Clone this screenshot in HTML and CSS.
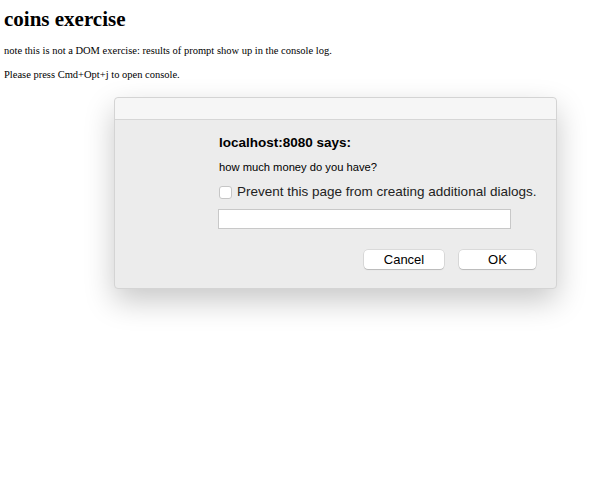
FILE: index.html
```html
<!DOCTYPE html>
<html>
<head>
<meta charset="utf-8">
<link rel="stylesheet" href="styles.css">
</head>
<body>
<div class="page">
  <h1 class="title">coins exercise</h1>
  <p class="note">note this is not a DOM exercise: results of prompt show up in the console log.</p>
  <p class="note">Please press Cmd+Opt+j to open console.</p>
</div>
<div class="dialog">
  <div class="dialog-bar"></div>
  <div class="dialog-body">
    <div class="dialog-title">localhost:8080 says:</div>
    <div class="dialog-msg">how much money do you have?</div>
    <label class="dialog-check"><span class="box"></span><span>Prevent this page from creating additional dialogs.</span></label>
    <div class="dialog-input"></div>
    <div class="dialog-buttons">
      <div class="btn btn-cancel">Cancel</div>
      <div class="btn btn-ok">OK</div>
    </div>
  </div>
</div>
</body>
</html>
```
FILE: styles.css
```css
html, body { margin: 0; padding: 0; background: #fff; }
body { width: 600px; height: 504px; position: relative; overflow: hidden; }
.page { padding: 7px 4px; font-family: "Liberation Serif", serif; color: #000; }
.title { font-size: 21px; font-weight: bold; margin: 0 0 13px; line-height: 24px; }
.note { font-size: 10.5px; margin: 0 0 10px; line-height: 14px; }
.dialog {
  position: absolute; left: 114px; top: 97px; width: 443px; height: 192px;
  background: #ececec; border: 1px solid #d4d4d4; border-radius: 4px; box-sizing: border-box;
  box-shadow: 0 12px 30px rgba(0,0,0,0.22);
  font-family: "Liberation Sans", Arial, sans-serif; color: #000;
}
.dialog-bar { height: 21px; background: #f6f6f6; border-bottom: 1px solid #d6d6d6; border-radius: 4px 4px 0 0; }
.dialog-body { padding: 15px 20px 0 104px; display: flex; flex-direction: column; }
.dialog-title { font-size: 13.5px; font-weight: bold; line-height: 16px; }
.dialog-msg { font-size: 11.2px; margin-top: 9px; line-height: 14px; }
.dialog-check { display: flex; align-items: center; gap: 5px; margin-top: 10px; font-size: 13.5px; line-height: 16px; color: #222; white-space: nowrap; }
.box { width: 13px; height: 13px; flex: none; background: #fff; border: 1px solid #c6c6c6; border-radius: 3px; box-sizing: border-box; }
.dialog-input { width: 293px; height: 20px; margin-top: 9px; margin-left: -1px; background: #fff; border: 1px solid #c8c8c8; box-sizing: border-box; }
.dialog-buttons { display: flex; justify-content: flex-end; gap: 15px; margin-top: 21px; }
.btn { height: 19px; background: #fff; border-radius: 4px; box-shadow: 0 0 0 0.5px rgba(0,0,0,0.15), 0 1px 1px rgba(0,0,0,0.15); font-size: 13px; line-height: 19px; text-align: center; }
.btn-cancel { width: 80px; }
.btn-ok { width: 77px; }
```
